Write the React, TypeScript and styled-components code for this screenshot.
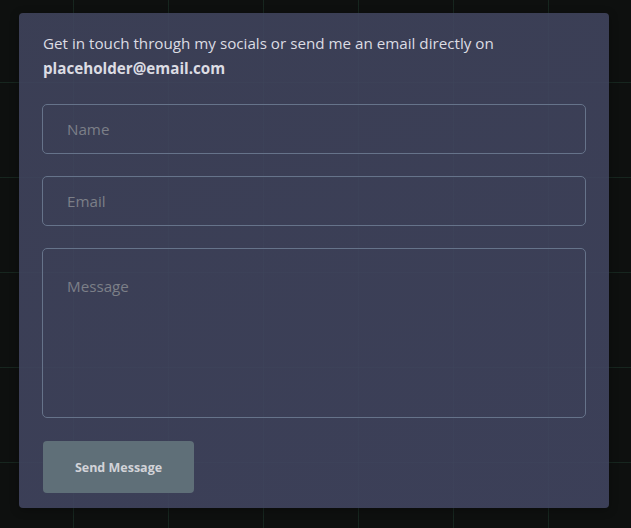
import styled, { createGlobalStyle } from 'styled-components';

const GlobalStyle = createGlobalStyle`
	html, body {
		margin: 0;
		padding: 0;
	}
	body {
		min-height: 528px;
		background-color: #0e100f;
		background-image:
			linear-gradient(to right, rgba(40, 80, 60, 0.35) 1px, transparent 1px),
			linear-gradient(to bottom, rgba(40, 80, 60, 0.35) 1px, transparent 1px);
		background-size: 95px 95px;
		background-position: 73px 82px;
		font-family: 'Open Sans', 'Noto Sans', sans-serif;
	}
`;

const Page = styled.div`
	padding: 13px 22px 20px 19px;
`;

const Card = styled.section`
	width: 590px;
	box-sizing: border-box;
	padding: 18px 23px 15px 23px;
	border-radius: 4px;
	background: linear-gradient(160deg, rgba(66, 70, 96, 0.86), rgba(66, 70, 98, 0.88));
	box-shadow: 0 2px 10px rgba(0, 0, 0, 0.3);
`;

const Intro = styled.p`
	margin: 0 0 23px 1px;
	font-size: 15.2px;
	line-height: 25px;
	color: #dcdce3;
`;

const Email = styled.strong`
	font-weight: 700;
`;

const Form = styled.form`
	display: flex;
	flex-direction: column;
	gap: 22px;
`;

const Field = styled.input`
	height: 50px;
	box-sizing: border-box;
	padding: 0 24px;
	border: 1px solid #66738a;
	border-radius: 5px;
	background: transparent;
	font-family: inherit;
	font-size: 15.2px;
	color: #dcdce3;
	outline: none;

	&::placeholder {
		color: #7c7f88;
	}
`;

const Area = styled.textarea`
	height: 170px;
	box-sizing: border-box;
	padding: 27px 24px;
	border: 1px solid #66738a;
	border-radius: 5px;
	background: transparent;
	font-family: inherit;
	font-size: 15.2px;
	color: #dcdce3;
	resize: none;
	outline: none;

	&::placeholder {
		color: #7c7f88;
	}
`;

const SendButton = styled.button`
	align-self: flex-start;
	width: 151px;
	height: 52px;
	margin: 1px 0 0 1px;
	border: none;
	border-radius: 4px;
	background: #5f6f78;
	color: #d2d3d8;
	font-family: inherit;
	font-size: 12.5px;
	font-weight: 700;
	cursor: pointer;
`;

export default function App() {
	return (
		<>
			<GlobalStyle />
			<Page>
				<Card>
					<Intro>
						Get in touch through my socials or send me an email directly on
						<br />
						<Email>placeholder@email.com</Email>
					</Intro>
					<Form onSubmit={(e) => e.preventDefault()}>
						<Field type="text" placeholder="Name" />
						<Field type="email" placeholder="Email" />
						<Area placeholder="Message" />
						<SendButton type="submit">Send Message</SendButton>
					</Form>
				</Card>
			</Page>
		</>
	);
}
